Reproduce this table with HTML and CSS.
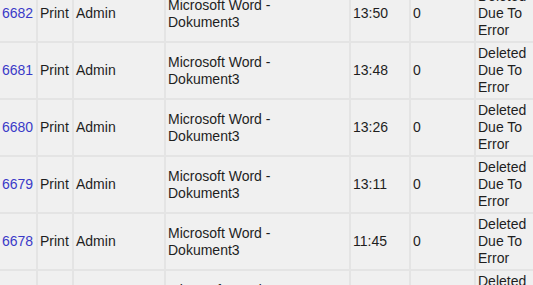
FILE: index.html
```html
<!DOCTYPE html>
<html>
<head>
<meta charset="utf-8">
<link rel="stylesheet" href="styles.css">
</head>
<body>
<table class="jobs">
  <colgroup>
    <col class="c-id"><col class="c-type"><col class="c-user"><col class="c-doc"><col class="c-time"><col class="c-pages"><col class="c-status">
  </colgroup>
  <tbody>
    <tr><td><a href="#">6682</a></td><td>Print</td><td>Admin</td><td class="doc">Microsoft Word - Dokument3</td><td>13:50</td><td>0</td><td>Deleted Due To Error</td></tr>
    <tr><td><a href="#">6681</a></td><td>Print</td><td>Admin</td><td class="doc">Microsoft Word - Dokument3</td><td>13:48</td><td>0</td><td>Deleted Due To Error</td></tr>
    <tr><td><a href="#">6680</a></td><td>Print</td><td>Admin</td><td class="doc">Microsoft Word - Dokument3</td><td>13:26</td><td>0</td><td>Deleted Due To Error</td></tr>
    <tr><td><a href="#">6679</a></td><td>Print</td><td>Admin</td><td class="doc">Microsoft Word - Dokument3</td><td>13:11</td><td>0</td><td>Deleted Due To Error</td></tr>
    <tr><td><a href="#">6678</a></td><td>Print</td><td>Admin</td><td class="doc">Microsoft Word - Dokument3</td><td>11:45</td><td>0</td><td>Deleted Due To Error</td></tr>
    <tr><td><a href="#">6677</a></td><td>Print</td><td>Admin</td><td class="doc">Microsoft Word - Dokument3</td><td>11:40</td><td>0</td><td>Deleted Due To Error</td></tr>
  </tbody>
</table>
</body>
</html>
```
FILE: styles.css
```css
html, body {
  margin: 0;
  padding: 0;
  background: #ffffff;
  overflow: hidden;
}
.jobs {
  margin: -16px 0 0 -2px;
  border-collapse: separate;
  border-spacing: 2px;
  table-layout: fixed;
  width: 540px;
  background: #e4e4e4;
  font-family: "Liberation Sans", Arial, sans-serif;
  font-size: 14px;
  line-height: 17px;
  color: #1e1e1e;
}
.jobs td {
  background: #f0f0f0;
  padding: 2px;
  height: 51px;
  vertical-align: middle;
  text-align: left;
}
.jobs td.doc {
  padding-right: 20px;
}
.jobs a {
  color: #3a3ac8;
  text-decoration: none;
}
.c-id { width: 36px; }
.c-type { width: 34px; }
.c-user { width: 90px; }
.c-doc { width: 183px; }
.c-time { width: 58px; }
.c-pages { width: 63px; }
.c-status { width: 60px; }
```
